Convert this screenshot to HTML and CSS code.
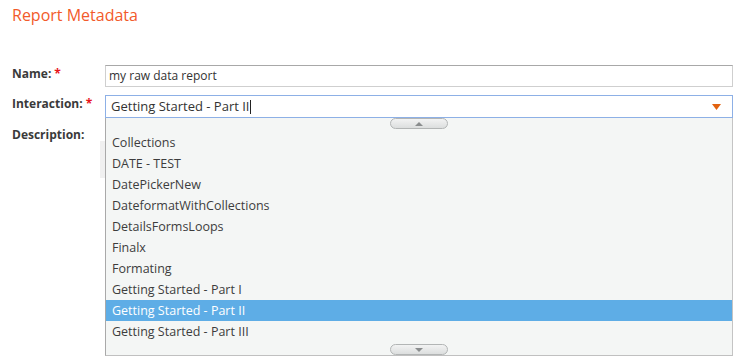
FILE: index.html
```html
<!DOCTYPE html>
<html>
<head>
<meta charset="utf-8">
<link rel="stylesheet" href="styles.css">
</head>
<body>
<div class="page">
  <h1 class="title">Report Metadata</h1>
  <div class="form">
    <div class="label">Name:<span class="req">*</span></div>
    <div class="input">my raw data report</div>

    <div class="label">Interaction:<span class="req">*</span></div>
    <div class="select-wrap">
      <div class="select">
        <span class="select-text">Getting Started - Part II</span><span class="caret"></span>
        <svg class="arrow" width="9" height="6" viewBox="0 0 9 6"><path d="M0 0H9L4.5 6Z" fill="#e2620f"/></svg>
      </div>
      <div class="dropdown">
        <div class="scroll-area up"><div class="scroll-btn"><span class="tri tri-up"></span></div></div>
        <ul class="options">
          <li>Collections</li>
          <li>DATE - TEST</li>
          <li>DatePickerNew</li>
          <li>DateformatWithCollections</li>
          <li>DetailsFormsLoops</li>
          <li>Finalx</li>
          <li>Formating</li>
          <li>Getting Started - Part I</li>
          <li class="selected">Getting Started - Part II</li>
          <li>Getting Started - Part III</li>
        </ul>
        <div class="scroll-area down"><div class="scroll-btn"><span class="tri tri-down"></span></div></div>
      </div>
    </div>

    <div class="label">Description:</div>
    <div class="desc"><div class="desc-edge"></div></div>
  </div>
</div>
</body>
</html>
```

FILE: styles.css
```css
html, body {
  margin: 0;
  padding: 0;
  background: #ffffff;
}
body {
  width: 734px;
  height: 360px;
  overflow: hidden;
  font-family: "Open Sans", "Liberation Sans", sans-serif;
  color: #333333;
}
.page {
  padding-left: 12px;
}
.title {
  margin: 0;
  padding-top: 4px;
  font-size: 16px;
  line-height: 22px;
  font-weight: normal;
  color: #f25a2a;
}
.form {
  margin-top: 39px;
  display: grid;
  grid-template-columns: 93px 628px;
  row-gap: 8px;
}
.label {
  font-size: 12px;
  font-weight: bold;
  color: #3a3a3a;
  line-height: 17px;
}
.req {
  color: #e8141b;
  margin-left: 3px;
}
.input {
  box-sizing: border-box;
  height: 22px;
  border: 1px solid #cfcfcf;
  border-top-color: #a8a8a8;
  padding-left: 3px;
  font-size: 12px;
  line-height: 19px;
  color: #333333;
}
.select-wrap {
  position: relative;
}
.select {
  box-sizing: border-box;
  height: 23px;
  border: 1px solid #8db0e6;
  padding-left: 5px;
  font-size: 13px;
  line-height: 21px;
  color: #333333;
  display: flex;
  align-items: center;
  background: #ffffff;
}
.caret {
  display: inline-block;
  width: 1px;
  height: 14px;
  background: #222;
  margin-left: 1px;
}
.arrow {
  margin-left: auto;
  margin-right: 11px;
}
.dropdown {
  position: absolute;
  top: 23px;
  left: 0;
  width: 628px;
  box-sizing: border-box;
  background: #f4f6f5;
  border-left: 1px solid #a9a9a9;
  border-right: 1px solid #c4c4c4;
  border-bottom: 1px solid #c0c0c0;
  z-index: 2;
}
.scroll-area {
  display: flex;
  justify-content: center;
}
.scroll-area.up {
  height: 14px;
}
.scroll-area.down {
  height: 13px;
}
.scroll-area.down .scroll-btn {
  margin-top: 2px;
}
.scroll-btn {
  box-sizing: border-box;
  width: 58px;
  height: 11px;
  border: 1px solid #b2b5b5;
  border-radius: 6px;
  background: linear-gradient(#f2f3f3, #dcdede);
  display: flex;
  align-items: center;
  justify-content: center;
}
.tri {
  width: 0;
  height: 0;
  border-left: 4px solid transparent;
  border-right: 4px solid transparent;
}
.tri-up {
  border-bottom: 4px solid #8a8d8e;
}
.tri-down {
  border-top: 4px solid #8a8d8e;
}
.options {
  list-style: none;
  margin: 0;
  padding: 0;
}
.options li {
  height: 21px;
  line-height: 21px;
  padding-left: 6px;
  font-size: 12.5px;
  color: #3d3d3d;
}
.options li.selected {
  background: #5eade6;
  color: #ffffff;
}
.desc {
  height: 60px;
  position: relative;
}
.desc-edge {
  margin-left: -5px;
  margin-top: 15px;
  width: 8px;
  height: 37px;
  background: #f0f0f0;
}
```
